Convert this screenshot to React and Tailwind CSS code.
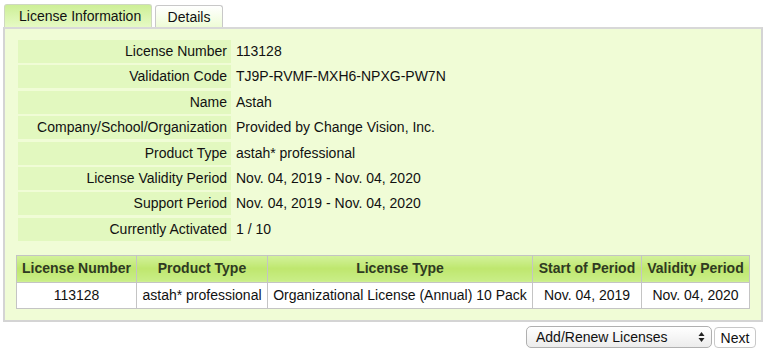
import React from 'react';

const details = [
  ['License Number', '113128'],
  ['Validation Code', 'TJ9P-RVMF-MXH6-NPXG-PW7N'],
  ['Name', 'Astah'],
  ['Company/School/Organization', 'Provided by Change Vision, Inc.'],
  ['Product Type', 'astah* professional'],
  ['License Validity Period', 'Nov. 04, 2019 - Nov. 04, 2020'],
  ['Support Period', 'Nov. 04, 2019 - Nov. 04, 2020'],
  ['Currently Activated', '1 / 10'],
];

const columns = [
  { label: 'License Number', value: '113128', w: 'w-[120px]' },
  { label: 'Product Type', value: 'astah* professional', w: 'w-[131px]' },
  { label: 'License Type', value: 'Organizational License (Annual) 10 Pack', w: 'w-[265px]' },
  { label: 'Start of Period', value: 'Nov. 04, 2019', w: 'w-[109px]' },
  { label: 'Validity Period', value: 'Nov. 04, 2020', w: 'w-[108px]' },
];

const App = () => {
  return (
    <div className="w-[768px] h-[354px] bg-white text-[14px] text-[#111] font-['Liberation_Sans',Arial,sans-serif] overflow-hidden">
      {/* Tabs */}
      <div className="flex items-end pl-[4px] pt-[4px] h-[27px] gap-[3px]">
        <div className="h-[23px] w-[148px] flex items-center pl-[14px] border border-b-0 border-[#cfd8c0] rounded-t-[3px] bg-gradient-to-b from-[#cdef96] to-[#e6fac4]">
          License Information
        </div>
        <div className="h-[22px] w-[68px] flex items-center justify-center pt-[2px] border border-b-0 border-[#c8c8c8] rounded-t-[3px] bg-gradient-to-b from-white to-[#eefcd6]">
          Details
        </div>
      </div>

      {/* Panel */}
      <div className="ml-[3px] w-[760px] h-[295px] border-2 border-[#d4d4d4] border-t-[#d8d8d8] bg-[#f0fcd6] pt-[11px] px-[13px]">
        <div className="grid grid-cols-[213px_1fr] gap-x-[5px] gap-y-[2.4px] auto-rows-[23px]">
          {details.map(([label, value]) => (
            <React.Fragment key={label}>
              <div className="bg-[#e2f8bf] flex items-center justify-end pr-[4px]">{label}</div>
              <div className="flex items-center">{value}</div>
            </React.Fragment>
          ))}
        </div>

        <table className="mt-[14px] -ml-[2px] table-fixed w-[733px] border-collapse border border-[#c4c4c4]">
          <thead>
            <tr className="h-[27px]">
              {columns.map((c) => (
                <th
                  key={c.label}
                  className={`${c.w} p-0 border border-[#c4c4c4] font-bold text-[#2f3a22] bg-gradient-to-b from-[#d3f29c] via-[#bfe76e] to-[#c9ee88]`}
                >
                  {c.label}
                </th>
              ))}
            </tr>
          </thead>
          <tbody>
            <tr className="h-[26px] bg-white">
              {columns.map((c) => (
                <td key={c.label} className="p-0 text-center whitespace-nowrap border border-[#c4c4c4]">
                  {c.value}
                </td>
              ))}
            </tr>
          </tbody>
        </table>
      </div>

      {/* Footer */}
      <div className="flex justify-end items-center gap-[2px] pr-[12px] pt-[4px]">
        <div className="w-[186px] h-[22px] flex items-center justify-between pl-[9px] pr-[6px] border border-[#b0b0b0] rounded-[5px] bg-gradient-to-b from-white to-[#ececec]">
          <span>Add/Renew Licenses</span>
          <svg width="7" height="12" viewBox="0 0 7 12">
            <path d="M3.5 1 L6.5 5 H0.5 Z" fill="#222" />
            <path d="M3.5 11 L6.5 7 H0.5 Z" fill="#222" />
          </svg>
        </div>
        <button className="w-[42px] h-[21px] border border-[#c8c8c8] rounded-[4px] bg-white text-[14px]">Next</button>
      </div>
    </div>
  );
};

export default App;
